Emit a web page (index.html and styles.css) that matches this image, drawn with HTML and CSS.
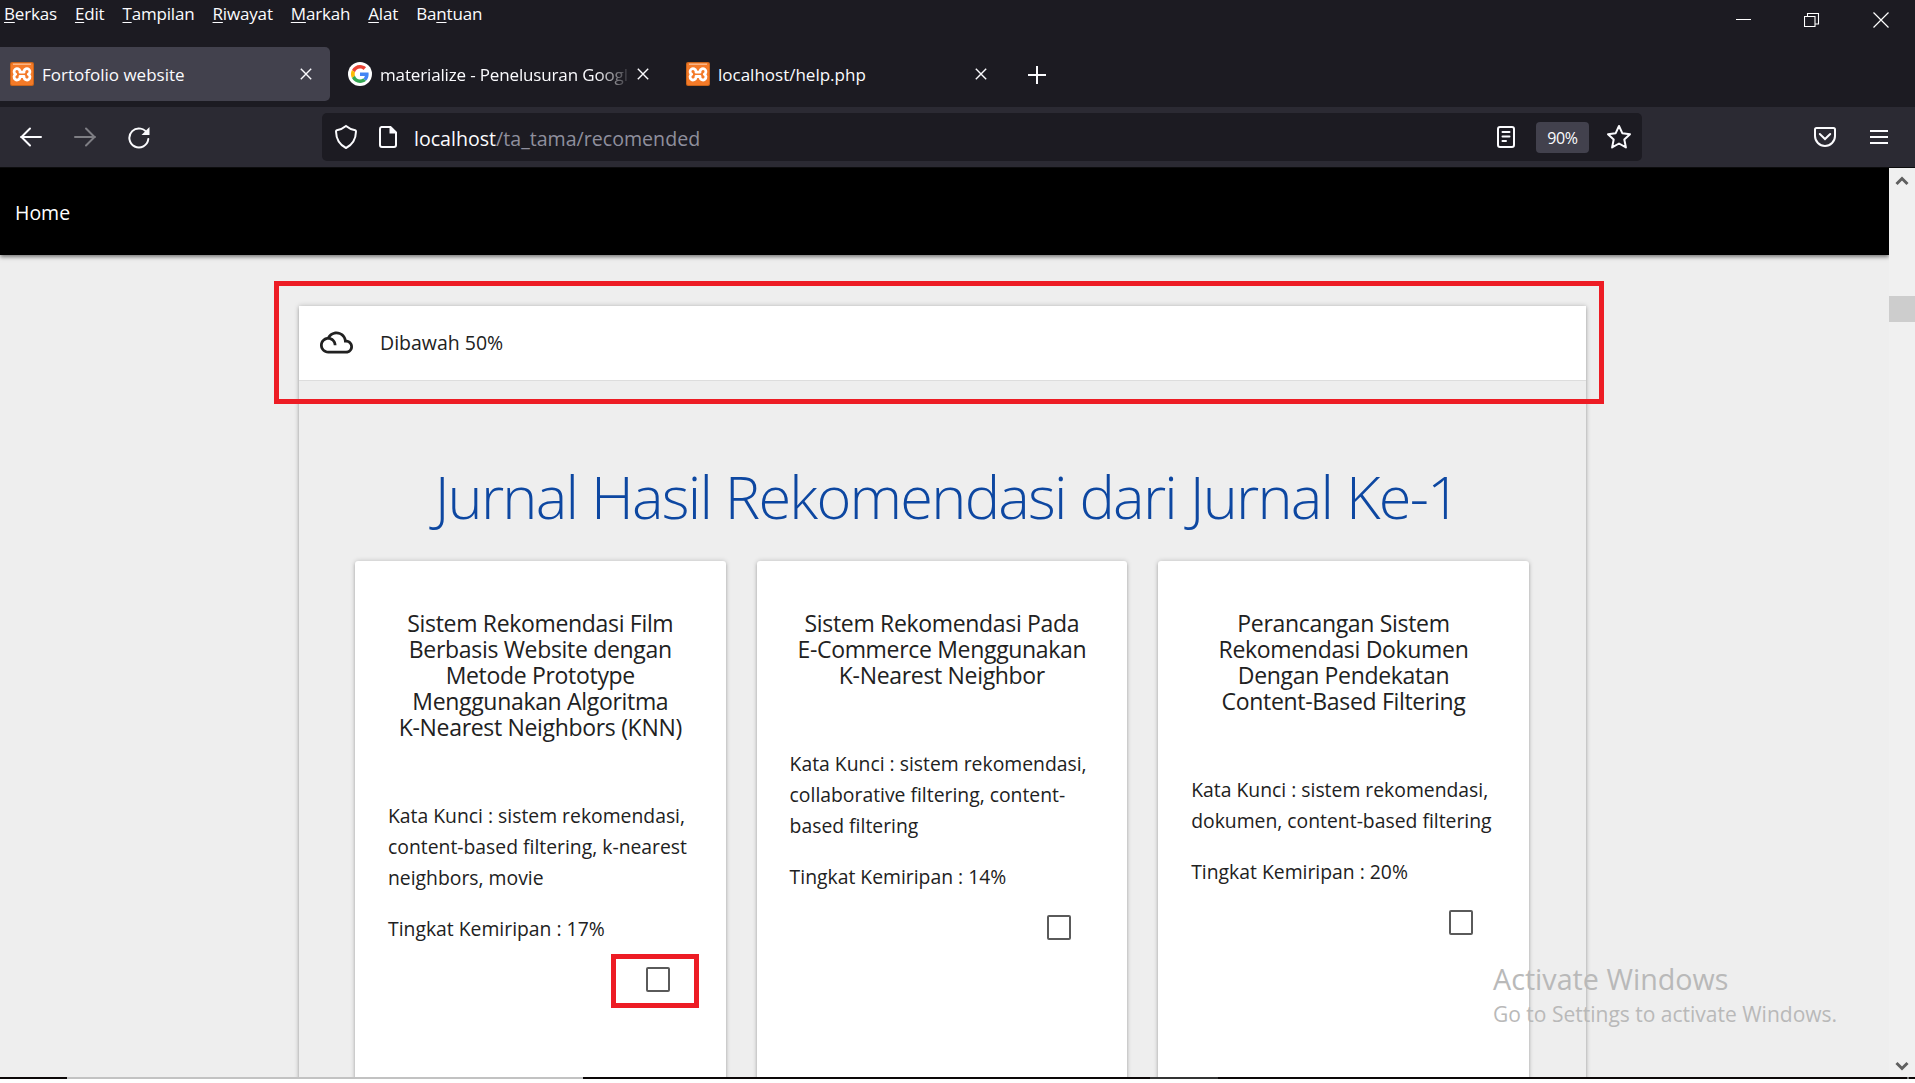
FILE: index.html
```html
<!DOCTYPE html>
<html lang="id">
<head>
<meta charset="utf-8">
<title>Fortofolio website</title>
<link rel="stylesheet" href="styles.css">
</head>
<body>
<svg class="defs" width="0" height="0">
  <symbol id="xampp" viewBox="0 0 24 24">
    <rect width="24" height="24" rx="2" fill="#c9641a"/>
    <rect x="1" y="1" width="22" height="22" rx="1.5" fill="#f47a28"/>
    <path d="M3 2.200h18" stroke="#fbc49c" stroke-width="1.200"/>
    <path d="M10 10.200h4V9a3 3 0 1 1 4.300 3.300A3 3 0 1 1 14 15.500v-1h-4v1a3 3 0 1 1-4.300-3.200A3 3 0 1 1 10 9z" fill="none" stroke="#fff" stroke-width="2.800" stroke-linejoin="round"/>
  </symbol>
  <symbol id="x" viewBox="0 0 12 12"><path d="M.8.800l10.400 10.400M11.200.8L.8 11.200" fill="none" stroke="#fbfbfe" stroke-width="1.400"/></symbol>
</svg>
<header class="chrome">
  <div class="titlebar">
    <nav class="menubar">
      <span><u>B</u>erkas</span><span><u>E</u>dit</span><span><u>T</u>ampilan</span><span><u>R</u>iwayat</span><span><u>M</u>arkah</span><span><u>A</u>lat</span><span>Ba<u>n</u>tuan</span>
    </nav>
    <div class="winbtns">
      <svg width="16" height="16"><path d="M1 7.500h15" stroke="#fff"/></svg>
      <svg width="16" height="16"><path d="M.5 4.500h10.500v10h-10.500zM3.500 4.500v-3h11v10.500h-3.500" fill="none" stroke="#fff" stroke-width="1.100"/></svg>
      <svg width="16" height="16"><path d="M.5.500l15 15M15.500.500l-15 15" stroke="#fff" stroke-width="1.200"/></svg>
    </div>
  </div>
  <div class="tabs">
    <div class="tab active"><svg class="fav"><use href="#xampp"/></svg><span class="tt t1">Fortofolio website</span><svg class="close"><use href="#x"/></svg></div>
    <div class="tab"><svg class="fav" viewBox="0 0 48 48"><circle cx="24" cy="24" r="24" fill="#fff"/><g transform="translate(6 6) scale(.75)"><path fill="#ea4335" d="M24 9.500c3.540 0 6.710 1.220 9.210 3.600l6.850-6.850C35.900 2.380 30.470 0 24 0 14.620 0 6.510 5.380 2.560 13.220l7.980 6.190C12.430 13.720 17.740 9.500 24 9.500z"/><path fill="#4285f4" d="M46.980 24.550c0-1.570-.15-3.090-.38-4.550H24v9.020h12.940c-.58 2.960-2.260 5.480-4.780 7.180l7.730 6c4.510-4.180 7.090-10.360 7.090-17.650z"/><path fill="#fbbc05" d="M10.530 28.590a14.500 14.500 0 0 1 0-9.180l-7.980-6.190a24 24 0 0 0 0 21.560z"/><path fill="#34a853" d="M24 48c6.480 0 11.930-2.130 15.890-5.810l-7.730-6c-2.150 1.450-4.920 2.300-8.160 2.300-6.260 0-11.570-4.220-13.470-9.910l-7.980 6.190C6.510 42.620 14.620 48 24 48z"/></g></svg><span class="tt t2">materialize - Penelusuran Googl</span><svg class="close"><use href="#x"/></svg></div>
    <div class="tab"><svg class="fav"><use href="#xampp"/></svg><span class="tt t3">localhost/help.php</span><svg class="close"><use href="#x"/></svg></div>
    <svg class="plus" width="20" height="20"><path d="M10 1v18M1 10h18" stroke="#fbfbfe" stroke-width="2"/></svg>
  </div>
  <div class="toolbar">
    <div class="navbtns">
      <svg width="24" height="24"><path d="M2 12h20M11 3.500L2.500 12l8.500 8.500" class="ico"/></svg>
      <svg width="24" height="24" class="dim"><path d="M2 12h20M13 3.500l8.500 8.500-8.500 8.500" class="ico"/></svg>
      <svg width="24" height="24"><path d="M20.500 9A9.500 9.500 0 1 0 21.300 14" class="ico"/><path d="M22.500 2v8h-8z" fill="#fbfbfe"/></svg>
    </div>
    <div class="urlbar">
      <svg class="shield" width="24" height="26"><path d="M12 2c3 2.500 6 3.700 9.200 4.300.8.200.8.700.8 1.200-.2 7.500-3 13-10 16.500C5 20.500 2.200 15 2 7.500c0-.5 0-1 .8-1.200C6 5.700 9 4.500 12 2z" class="ico"/></svg>
      <svg class="page" width="20" height="24"><path d="M3.500 2h9l5.500 5.500v12.500a2 2 0 0 1-2 2h-12a2 2 0 0 1-2-2v-16a2 2 0 0 1 1.500-2z" class="ico"/><path d="M11.500 1.500l7 7h-7z" fill="#fbfbfe"/></svg>
      <span class="url"><b>localhost</b>/ta_tama/recomended</span>
      <svg class="reader" width="20" height="24"><rect x="2" y="2" width="16" height="20" rx="2" class="ico"/><path d="M6.500 7h7M6.500 11.500h7M6.500 16h3.500" class="ico"/></svg>
      <span class="zoom">90%</span>
      <svg class="star" width="26" height="26"><path d="M13 2l3.300 7.200 7.700 1-5.700 5.300 1.600 7.900-6.900-3.900-6.900 3.900 1.600-7.900L2 10.200l7.700-1z" class="ico" stroke-linejoin="round"/></svg>
    </div>
    <svg class="pocket" width="24" height="22"><path d="M3.500 2h17a1.500 1.500 0 0 1 1.500 1.500v6.500a10 10 0 0 1-20 0v-6.500A1.500 1.500 0 0 1 3.500 2z" class="ico"/><path d="M6.800 8l5.200 5 5.200-5" class="ico"/></svg>
    <svg class="burger" width="18" height="16"><path d="M0 2h18M0 8h18M0 14h18" class="ico"/></svg>
  </div>
</header>
<div class="view">
  <main class="content">
    <nav class="sitenav"><a>Home</a></nav>
    <section class="panel">
      <div class="phead">
        <svg width="33" height="33" viewBox="0 0 24 24"><path fill="#212121" d="M19.350 10.040C18.670 6.590 15.640 4 12 4 9.110 4 6.610 5.640 5.360 8.040 2.350 8.360 0 10.900 0 14c0 3.310 2.690 6 6 6h13c2.760 0 5-2.240 5-5 0-2.640-2.050-4.780-4.650-4.960zM19 18H6c-2.210 0-4-1.790-4-4s1.790-4 4-4 4 1.790 4 4h2c0-2.760-1.860-5.080-4.400-5.780C8.610 6.880 10.200 6 12 6c3.030 0 5.500 2.470 5.500 5.500v.5H19c1.650 0 3 1.350 3 3s-1.350 3-3 3z"/></svg>
        <span>Dibawah 50%</span>
      </div>
      <h1>Jurnal Hasil Rekomendasi dari Jurnal Ke-1</h1>
      <div class="cards">
        <article class="card">
          <h2>Sistem Rekomendasi Film<br>Berbasis Website dengan<br>Metode Prototype<br>Menggunakan Algoritma<br>K-Nearest Neighbors (KNN)</h2>
          <p>Kata Kunci : sistem rekomendasi,<br>content-based filtering, k-nearest<br>neighbors, movie</p>
          <p>Tingkat Kemiripan : 17%</p>
          <i class="box"></i>
        </article>
        <article class="card">
          <h2>Sistem Rekomendasi Pada<br>E-Commerce Menggunakan<br>K-Nearest Neighbor</h2>
          <p>Kata Kunci : sistem rekomendasi,<br>collaborative filtering, content-<br>based filtering</p>
          <p>Tingkat Kemiripan : 14%</p>
          <i class="box"></i>
        </article>
        <article class="card">
          <h2>Perancangan Sistem<br>Rekomendasi Dokumen<br>Dengan Pendekatan<br>Content-Based Filtering</h2>
          <p>Kata Kunci : sistem rekomendasi,<br>dokumen, content-based filtering</p>
          <p>Tingkat Kemiripan : 20%</p>
          <i class="box"></i>
        </article>
      </div>
    </section>
  </main>
  <aside class="scroll">
    <svg width="14" height="10"><path d="M1.500 8L7 2.500 12.500 8" fill="none" stroke="#606060" stroke-width="3"/></svg>
    <div class="thumb"></div>
    <svg class="down" width="14" height="10"><path d="M1.500 2L7 7.500 12.500 2" fill="none" stroke="#606060" stroke-width="3"/></svg>
  </aside>
</div>
<footer class="taskbar"></footer>
<div class="mark mark-head"></div>
<div class="mark mark-box"></div>
<div class="watermark"><div class="w1">Activate Windows</div><div class="w2">Go to Settings to activate Windows.</div></div>
</body>
</html>
```
FILE: styles.css
```css
* { box-sizing: border-box; }
body { margin: 0; width: 1915px; height: 1083px; overflow: hidden; background: #fff; font-family: "Open Sans", "Noto Sans", sans-serif; color: #212121; position: relative; }
svg { display: block; flex: none; }
.defs { position: absolute; }
.ico { fill: none; stroke: #fbfbfe; stroke-width: 2; stroke-linecap: round; }
.chrome { background: #1c1b22; color: #fbfbfe; height: 168px; border-bottom: 1px solid #0c0c0d; }
.titlebar { height: 47px; display: flex; justify-content: space-between; }
.menubar { display: flex; gap: 18px; padding-left: 4px; font-size: 17px; line-height: 27px; letter-spacing: -.170px; }
.menubar u { text-underline-offset: 2px; text-decoration-thickness: 1px; }
.winbtns { display: flex; gap: 53px; padding: 12px 26px 0 0; }
.tabs { height: 60px; display: flex; align-items: flex-start; }
.tab { width: 338px; height: 54px; display: flex; align-items: center; padding: 0 19px 0 18px; }
.tab.active { width: 330px; padding: 0 18px 0 10px; background: #42414d; border-radius: 0 5px 5px 0; }
.fav { width: 24px; height: 24px; margin-right: 8px; }
.tt { flex: 1; min-width: 0; white-space: nowrap; font-size: 17px; }
.t2 { margin-right: 5px; letter-spacing: -.150px; mask-image: linear-gradient(90deg, #000 86%, transparent); }
.close { width: 12px; height: 12px; }
.plus { margin: 18px 0 0 21px; }
.toolbar { height: 60px; background: #2b2a33; display: flex; align-items: center; }
.navbtns { display: flex; gap: 30px; width: 322px; padding-left: 19px; }
.dim { opacity: .4; }
.urlbar { width: 1320px; height: 48px; background: #1c1b22; border-radius: 5px; display: flex; align-items: center; padding: 0 10px 0 12px; }
.page { margin-left: 20px; }
.url { flex: 1; margin-left: 16px; padding-top: 2px; font-size: 19.600px; color: #8f8f9d; white-space: nowrap; }
.url b { font-weight: 400; color: #fbfbfe; }
.zoom { width: 53px; height: 31px; margin: 0 17px 0 20px; border-radius: 4px; background: #42414d; font-size: 16px; line-height: 32px; text-align: center; letter-spacing: -.4px; }
.pocket { margin-left: 171px; }
.burger { margin-left: 33px; }
.view { display: flex; height: 909px; background: #eee; }
.content { width: 1889px; overflow: hidden; }
.sitenav { height: 87px; background: #000; color: #fff; padding-left: 15px; font-size: 19.500px; line-height: 90px; box-shadow: 0 2px 4px rgba(0,0,0,.5); }
.panel { width: 1287px; height: 900px; margin: 51px 0 0 299px; box-shadow: 0 2px 3px rgba(0,0,0,.18), 0 0 5px rgba(0,0,0,.22); }
.phead { height: 75px; background: #fff; border-bottom: 1px solid #ddd; display: flex; align-items: center; padding: 0 0 1px 21px; gap: 27px; font-size: 19.500px; }
h1 { margin: 70px 0 0; height: 110px; padding-left: 9px; line-height: 90px; font-size: 59.500px; letter-spacing: -1.750px; font-weight: 300; color: #0d47a1; text-align: center; white-space: nowrap; }
.cards { display: flex; gap: 31px; padding-left: 56px; }
.card { width: 370.600px; height: 620px; background: #fff; border-radius: 3px; padding: 49px 33px 0; box-shadow: 0 2px 3px rgba(0,0,0,.18), 0 0 5px rgba(0,0,0,.2); white-space: nowrap; }
.card h2 { margin: 0 0 60px; font-size: 23px; line-height: 26px; letter-spacing: -.320px; font-weight: 400; text-align: center; }
.card p { margin: 0 0 20px; font-size: 19.350px; line-height: 31px; }
.box { display: block; width: 24px; height: 25px; margin: 23px 0 0 257.500px; border: 2px solid #5a5a5a; border-radius: 2px; }
.scroll { width: 26px; background: #f0f0f0; display: flex; flex-direction: column; align-items: center; padding: 8px 0 6px; }
.thumb { width: 26px; height: 26px; margin-top: 110px; background: #cdcdcd; }
.down { margin-top: auto; }
.taskbar { height: 2px; background: linear-gradient(90deg, #0c0808 67px, #c2c2c2 67px 583px, #0c0808 583px 1150px, #333 1150px 1218px, #0c0808 1218px 1907px, #777 1907px 1909px, #0c0808 1909px); }
.mark { position: absolute; border: 5px solid #ed1c24; }
.mark-head { left: 274px; top: 281px; width: 1330px; height: 123px; }
.mark-box { left: 611px; top: 954px; width: 88px; height: 54px; }
.watermark { position: absolute; left: 1493px; top: 961px; color: #b9b9b9; white-space: nowrap; }
.w1 { font-size: 28.700px; line-height: 36px; }
.w2 { font-size: 21px; line-height: 34px; }
```
